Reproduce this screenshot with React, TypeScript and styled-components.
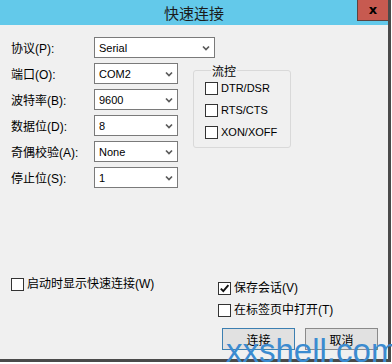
import styled, { createGlobalStyle } from "styled-components";

const GlobalStyle = createGlobalStyle`
  html, body {
    margin: 0;
    padding: 0;
    background: #ffffff;
    overflow: hidden;
  }
  * {
    box-sizing: border-box;
  }
`;

const CJK = `"Liberation Sans", "Noto Sans CJK SC", sans-serif`;

const Screen = styled.div`
  position: relative;
  width: 392px;
  height: 364px;
  overflow: hidden;
  font-family: ${CJK};
  color: #000;
`;

const Window = styled.div`
  width: 391px;
  height: 362px;
  display: flex;
  flex-direction: column;
  background: #f0f0f0;
  border-right: 3px solid #4a4a4a;
  border-bottom: 3px solid #4a4a4a;
`;

const TitleBar = styled.div`
  height: 25px;
  flex: none;
  display: grid;
  grid-template-columns: 1fr auto 1fr;
  background: #63c9ea;
`;

const Title = styled.div`
  grid-column: 2;
  align-self: center;
  font-family: "Noto Sans CJK SC", sans-serif;
  font-size: 15px;
  line-height: 25px;
  color: #1b1b1b;
`;

const CloseButton = styled.div`
  grid-column: 3;
  justify-self: end;
  width: 31px;
  height: 21px;
  display: flex;
  align-items: center;
  justify-content: center;
  background: #c75a50;
  border-left: 1px solid #5b4340;
  border-bottom: 1px solid #5b4340;
  font-family: "DejaVu Sans", sans-serif;
  font-weight: bold;
  font-size: 13px;
  line-height: 1;
  padding-bottom: 2px;
`;

const Body = styled.div`
  flex: 1;
  display: flex;
  flex-direction: column;
  padding: 12px 10px 9px 10px;
`;

const FieldRow = styled.div`
  display: flex;
  align-items: center;
  height: 21px;
`;

const Label = styled.div`
  width: 84px;
  font-size: 12px;
  padding-left: 1px;
  white-space: nowrap;
`;

const SelectBox = styled.div<{ $width: number }>`
  width: ${(p) => p.$width}px;
  height: 21px;
  display: flex;
  align-items: center;
  justify-content: space-between;
  padding: 0 4px 0 4px;
  border: 1px solid #7a7a7a;
  background: #fff;
  font-family: "Liberation Sans", sans-serif;
  font-size: 11px;
`;

const Middle = styled.div`
  display: flex;
  align-items: flex-start;
  gap: 15px;
  margin-top: 5px;
`;

const FieldColumn = styled.div`
  display: flex;
  flex-direction: column;
  gap: 5px;
`;

const GroupBox = styled.fieldset`
  width: 98px;
  margin: 0;
  padding: 0 0 8px 11px;
  border: 1px solid #d9d9d9;
  border-radius: 3px;
`;

const Legend = styled.legend`
  margin-left: 6px;
  padding: 0 1px;
  font-family: "Noto Sans CJK SC", sans-serif;
  font-size: 12px;
  line-height: 15px;
`;

const CheckList = styled.div<{ $gap: number }>`
  display: flex;
  flex-direction: column;
  gap: ${(p) => p.$gap}px;
  margin-top: 4px;
`;

const CheckRow = styled.div`
  display: flex;
  align-items: center;
  gap: 3px;
  height: 13px;
  white-space: nowrap;
`;

const Box = styled.span`
  width: 13px;
  height: 13px;
  flex: none;
  display: flex;
  align-items: center;
  justify-content: center;
  border: 1px solid #333;
  background: #fff;
`;

const CheckText = styled.span<{ $latin?: boolean }>`
  font-family: ${(p) => (p.$latin ? `"Liberation Sans", sans-serif` : CJK)};
  font-size: ${(p) => (p.$latin ? 11 : 12)}px;
  line-height: 13px;
`;

const Footer = styled.div`
  margin-top: auto;
  display: flex;
  align-items: flex-start;
  justify-content: space-between;
  padding-left: 1px;
`;

const RightColumn = styled.div`
  width: 160px;
  display: flex;
  flex-direction: column;
`;

const ButtonRow = styled.div`
  display: flex;
  justify-content: flex-end;
  gap: 10px;
  margin-top: 11px;
`;

const Button = styled.div<{ $primary?: boolean }>`
  width: 73px;
  height: 22px;
  display: flex;
  align-items: center;
  justify-content: center;
  background: #e1e1e1;
  border: 1px solid ${(p) => (p.$primary ? "#3c7fb1" : "#8a8a8a")};
  font-family: "Noto Sans CJK SC", sans-serif;
  font-size: 12px;
`;

const Watermark = styled.div`
  position: absolute;
  left: 226px;
  top: 334px;
  font-family: "Liberation Sans", sans-serif;
  font-size: 33px;
  line-height: 33px;
  color: #3b8bd0;
  white-space: nowrap;
`;

const Chevron = () => (
  <svg width="8" height="6" viewBox="0 0 8 6">
    <path d="M1 1.5 L4 4.5 L7 1.5" stroke="#5a5a5a" strokeWidth="1.7" fill="none" />
  </svg>
);

const Select = ({ value, width }: { value: string; width: number }) => (
  <SelectBox $width={width}>
    <span>{value}</span>
    <Chevron />
  </SelectBox>
);

const Check = ({ label, checked, latin }: { label: string; checked?: boolean; latin?: boolean }) => (
  <CheckRow>
    <Box>
      {checked && (
        <svg width="11" height="11" viewBox="0 0 11 11">
          <path d="M1.8 5.6 L4.3 8.2 L9.4 2.2" stroke="#111" strokeWidth="1.9" fill="none" />
        </svg>
      )}
    </Box>
    <CheckText $latin={latin}>{label}</CheckText>
  </CheckRow>
);

const fields = [
  { label: "端口(O):", value: "COM2" },
  { label: "波特率(B):", value: "9600" },
  { label: "数据位(D):", value: "8" },
  { label: "奇偶校验(A):", value: "None" },
  { label: "停止位(S):", value: "1" },
];

export default function App() {
  return (
    <Screen>
      <GlobalStyle />
      <Window>
        <TitleBar>
          <Title>快速连接</Title>
          <CloseButton>x</CloseButton>
        </TitleBar>
        <Body>
          <FieldRow>
            <Label>协议(P):</Label>
            <Select value="Serial" width={121} />
          </FieldRow>
          <Middle>
            <FieldColumn>
              {fields.map((f) => (
                <FieldRow key={f.label}>
                  <Label>{f.label}</Label>
                  <Select value={f.value} width={84} />
                </FieldRow>
              ))}
            </FieldColumn>
            <GroupBox>
              <Legend>流控</Legend>
              <CheckList $gap={9}>
                <Check label="DTR/DSR" latin />
                <Check label="RTS/CTS" latin />
                <Check label="XON/XOFF" latin />
              </CheckList>
            </GroupBox>
          </Middle>
          <Footer>
            <Check label="启动时显示快速连接(W)" />
            <RightColumn>
              <CheckList $gap={9}>
                <Check label="保存会话(V)" checked />
                <Check label="在标签页中打开(T)" />
              </CheckList>
              <ButtonRow>
                <Button $primary>连接</Button>
                <Button>取消</Button>
              </ButtonRow>
            </RightColumn>
          </Footer>
        </Body>
      </Window>
      <Watermark>xxshell.com</Watermark>
    </Screen>
  );
}
